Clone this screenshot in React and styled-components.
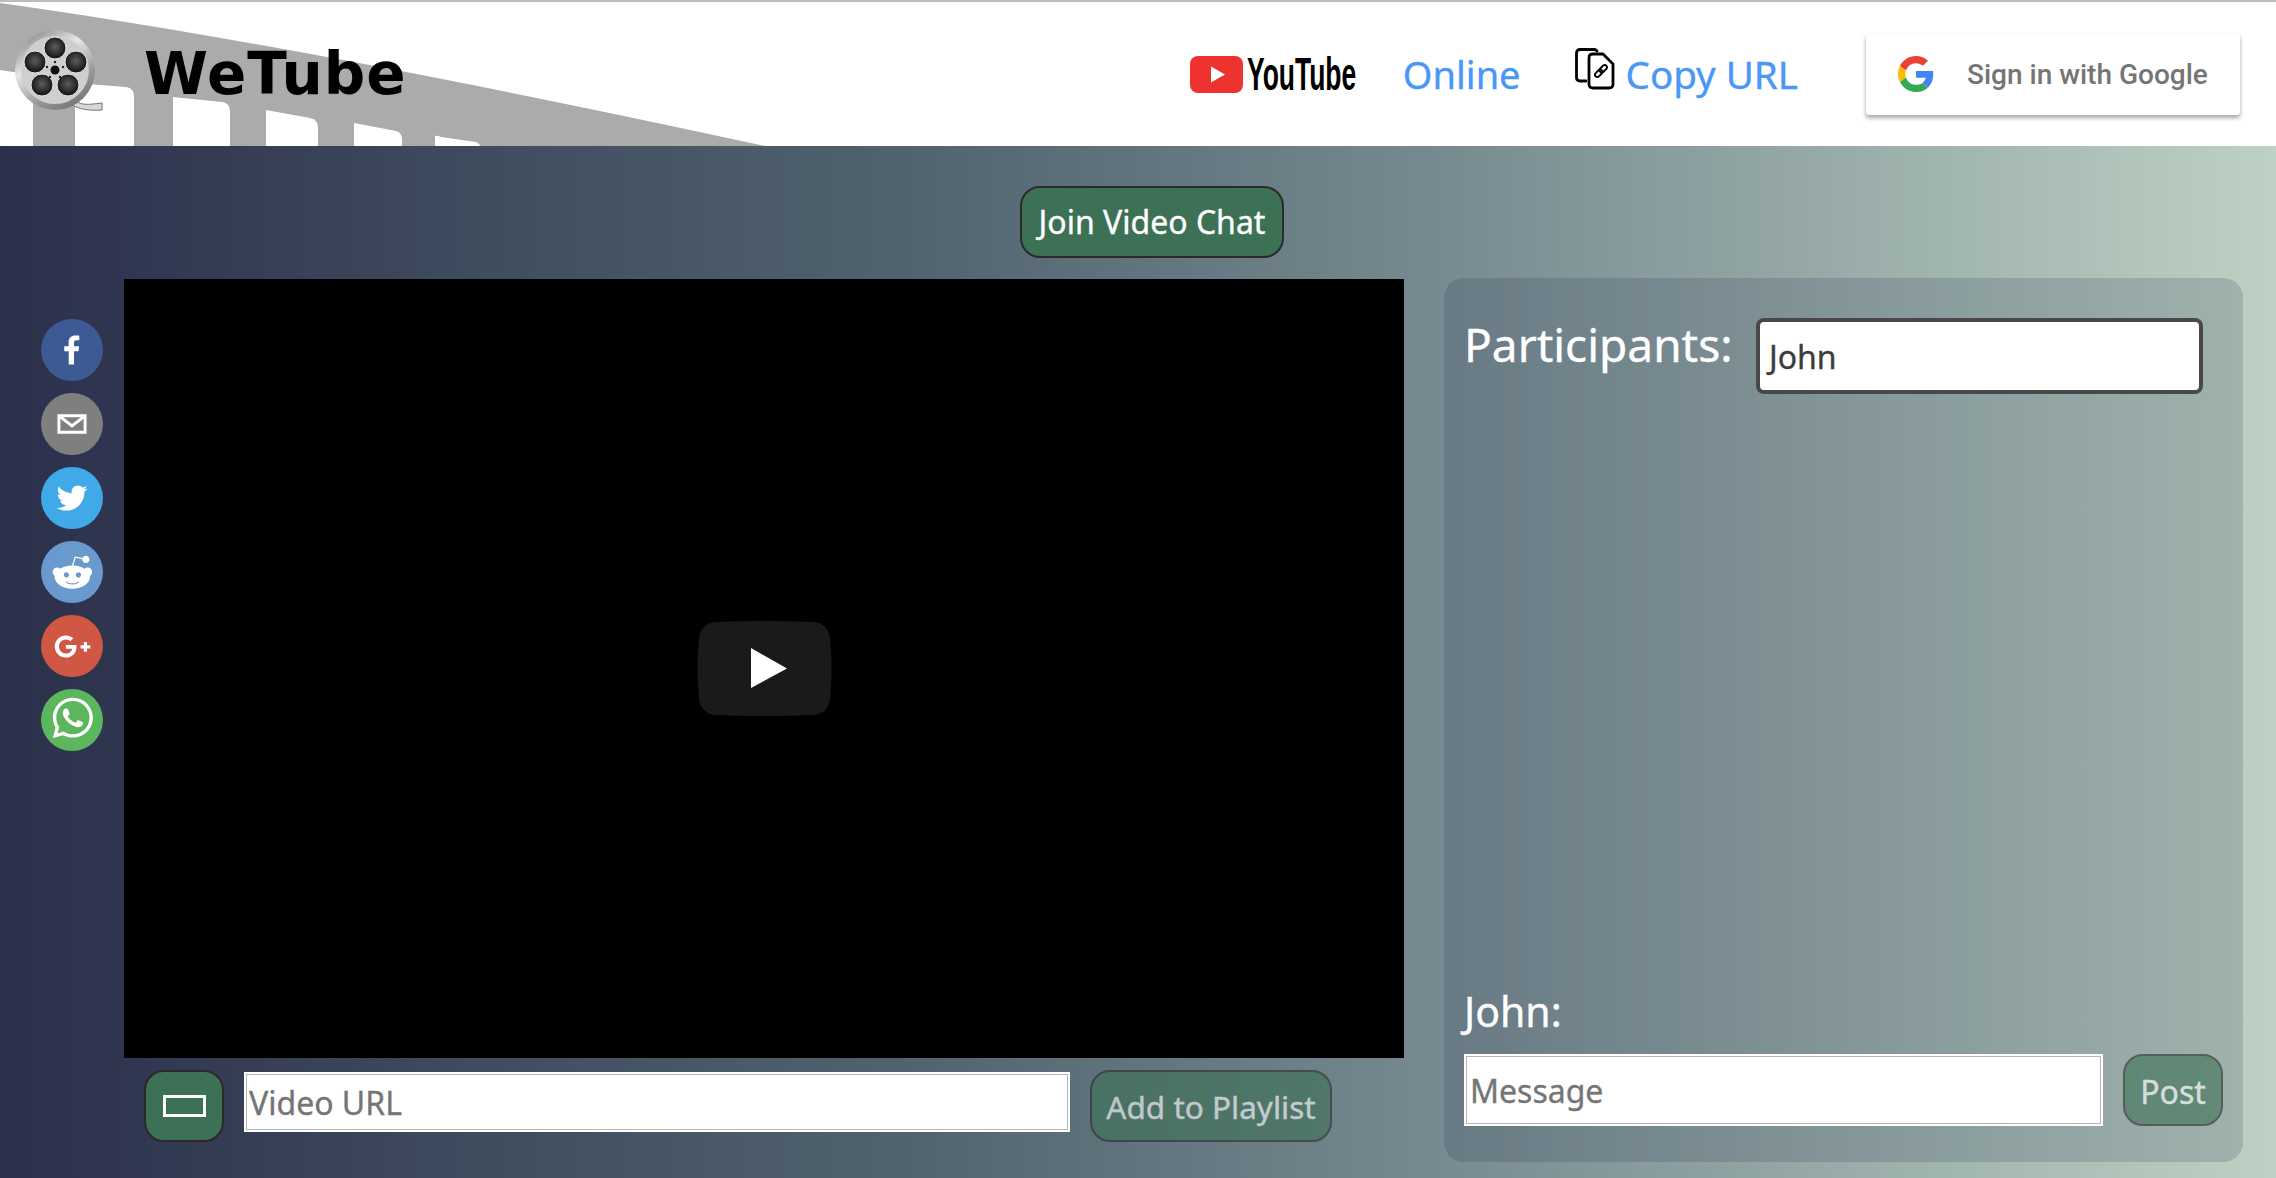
import React from "react";
import styled, { createGlobalStyle } from "styled-components";
import { FaGooglePlusG } from "react-icons/fa";

const SHARE_ICONS = [
  {
    name: "facebook",
    color: "#3d5a94",
    d: "M34.1,47V33.3h4.6l0.7-5.3h-5.3v-3.4c0-1.5,0.4-2.6,2.6-2.6l2.8,0v-4.8c-0.5-0.1-2.2-0.2-4.1-0.2 c-4.1,0-6.9,2.5-6.9,7V28H24v5.3h4.6V47H34.1z",
  },
  {
    name: "email",
    color: "#7f7f7f",
    d: "M17,22v20h30V22H17z M41.1,25L32,32.1L22.9,25H41.1z M20,39V26.6l12,9.3l12-9.3V39H20z",
  },
  {
    name: "twitter",
    color: "#40a9e8",
    d: "M48,22.1c-1.2,0.5-2.4,0.9-3.8,1c1.4-0.8,2.4-2.1,2.9-3.6c-1.3,0.8-2.7,1.3-4.2,1.6 C41.7,19.8,40,19,38.2,19c-3.6,0-6.6,2.9-6.6,6.6c0,0.5,0.1,1,0.2,1.5c-5.5-0.3-10.3-2.9-13.5-6.9c-0.6,1-0.9,2.1-0.9,3.3 c0,2.3,1.2,4.3,2.9,5.5c-1.1,0-2.1-0.3-3-0.8c0,0,0,0.1,0,0.1c0,3.2,2.3,5.8,5.3,6.4c-0.6,0.1-1.1,0.2-1.7,0.2c-0.4,0-0.8,0-1.2-0.1 c0.8,2.6,3.3,4.5,6.1,4.6c-2.2,1.8-5.1,2.8-8.2,2.8c-0.5,0-1.1,0-1.6-0.1c2.9,1.9,6.4,2.9,10.1,2.9c12.1,0,18.7-10,18.7-18.7 c0-0.3,0-0.6,0-0.8C46,24.5,47.1,23.4,48,22.1z",
  },
  {
    name: "reddit",
    color: "#6a9acd",
    d: "m 52.8165,31.942362 c 0,-2.4803 -2.0264,-4.4965 -4.5169,-4.4965 -1.2155,0 -2.3171,0.4862 -3.128,1.2682 -3.077,-2.0247 -7.2403,-3.3133 -11.8507,-3.4782 l 2.5211,-7.9373 6.8272,1.5997 -0.0102,0.0986 c 0,2.0281 1.6575,3.6771 3.6958,3.6771 2.0366,0 3.6924,-1.649 3.6924,-3.6771 0,-2.0281 -1.6575,-3.6788 -3.6924,-3.6788 -1.564,0 -2.8968,0.9758 -3.4357,2.3443 l -7.3593,-1.7255 c -0.3213,-0.0782 -0.6477,0.1071 -0.748,0.4233 L 32,25.212062 c -4.8246,0.0578 -9.1953,1.3566 -12.41,3.4425 -0.8058,-0.7446 -1.8751,-1.2104 -3.0583,-1.2104 -2.4905,0 -4.5152,2.0179 -4.5152,4.4982 0,1.649 0.9061,3.0787 2.2389,3.8607 -0.0884,0.4794 -0.1462,0.9639 -0.1462,1.4569 0,6.6487 8.1736,12.0581 18.2223,12.0581 10.0487,0 18.224,-5.4094 18.224,-12.0581 0,-0.4658 -0.0493,-0.9248 -0.1275,-1.377 1.4144,-0.7599 2.3885,-2.2304 2.3885,-3.9406 z m -29.2808,3.0872 c 0,-1.4756 1.207,-2.6775 2.6894,-2.6775 1.4824,0 2.6877,1.2019 2.6877,2.6775 0,1.4756 -1.2053,2.6758 -2.6877,2.6758 -1.4824,0 -2.6894,-1.2002 -2.6894,-2.6758 z m 15.4037,7.9373 c -1.3549,1.3481 -3.4816,2.0043 -6.5008,2.0043 l -0.0221,-0.0051 -0.0221,0.0051 c -3.0209,0 -5.1476,-0.6562 -6.5008,-2.0043 -0.2465,-0.2448 -0.2465,-0.6443 0,-0.8891 0.2465,-0.2465 0.6477,-0.2465 0.8942,0 1.105,1.0999 2.9393,1.6337 5.6066,1.6337 l 0.0221,0.0051 0.0221,-0.0051 c 2.6673,0 4.5016,-0.5355 5.6066,-1.6354 0.2465,-0.2465 0.6477,-0.2448 0.8942,0 0.2465,0.2465 0.2465,0.6443 0,0.8908 z m -0.3213,-5.2615 c -1.4824,0 -2.6877,-1.2002 -2.6877,-2.6758 0,-1.4756 1.2053,-2.6775 2.6877,-2.6775 1.4824,0 2.6877,1.2019 2.6877,2.6775 0,1.4756 -1.2053,2.6758 -2.6877,2.6758 z",
  },
  { name: "google", color: "#cf5743", d: null },
  {
    name: "whatsapp",
    color: "#5cb65b",
    d: "m42.32286,33.93287c-0.5178,-0.2589 -3.04726,-1.49644 -3.52105,-1.66732c-0.4712,-0.17346 -0.81554,-0.2589 -1.15987,0.2589c-0.34175,0.51004 -1.33075,1.66474 -1.63108,2.00648c-0.30032,0.33658 -0.60064,0.36247 -1.11327,0.12945c-0.5178,-0.2589 -2.17994,-0.80259 -4.14759,-2.56312c-1.53269,-1.37217 -2.56312,-3.05503 -2.86603,-3.57283c-0.30033,-0.5178 -0.03366,-0.80259 0.22524,-1.06149c0.23301,-0.23301 0.5178,-0.59547 0.7767,-0.90616c0.25372,-0.31068 0.33657,-0.5178 0.51262,-0.85437c0.17088,-0.36246 0.08544,-0.64725 -0.04402,-0.90615c-0.12945,-0.2589 -1.15987,-2.79613 -1.58964,-3.80584c-0.41424,-1.00971 -0.84142,-0.88027 -1.15987,-0.88027c-0.29773,-0.02588 -0.64208,-0.02588 -0.98382,-0.02588c-0.34693,0 -0.90616,0.12945 -1.37736,0.62136c-0.4712,0.5178 -1.80194,1.76053 -1.80194,4.27186c0,2.51134 1.84596,4.945 2.10227,5.30747c0.2589,0.33657 3.63497,5.51458 8.80262,7.74113c1.23237,0.5178 2.1903,0.82848 2.94111,1.08738c1.23237,0.38836 2.35599,0.33657 3.24402,0.20712c0.99159,-0.15534 3.04985,-1.24272 3.47963,-2.45956c0.44013,-1.21683 0.44013,-2.22654 0.31068,-2.45955c-0.12945,-0.23301 -0.46601,-0.36247 -0.98382,-0.59548m-9.40068,12.84407l-0.02589,0c-3.05503,0 -6.08417,-0.82849 -8.72495,-2.38189l-0.62136,-0.37023l-6.47252,1.68286l1.73463,-6.29129l-0.41424,-0.64725c-1.70875,-2.71846 -2.6149,-5.85116 -2.6149,-9.07706c0,-9.39809 7.68934,-17.06155 17.15993,-17.06155c4.58253,0 8.88029,1.78642 12.11655,5.02268c3.23625,3.21036 5.02267,7.50812 5.02267,12.06476c-0.0078,9.3981 -7.69712,17.06155 -17.14699,17.06155m14.58906,-31.58846c-3.93529,-3.80584 -9.1133,-5.95471 -14.62789,-5.95471c-11.36055,0 -20.60848,9.2065 -20.61625,20.52564c0,3.61684 0.94757,7.14565 2.75211,10.26282l-2.92557,10.63564l10.93337,-2.85309c3.0136,1.63108 6.4052,2.4958 9.85634,2.49839l0.01037,0c11.36574,0 20.61884,-9.2091 20.62403,-20.53082c0,-5.48093 -2.14111,-10.64081 -6.03239,-14.51915",
  },
];

const FILM_HOLES = [
  "M0,70 L33,75 V146 H0 Z",
  "M75,83 L126,87 Q134,88 134,96 V146 H75 Z",
  "M173,97 L222,102 Q230,103 230,111 V146 H173 Z",
  "M266,110 L310,118 Q318,120 318,127 V146 H266 Z",
  "M354,123 L396,131 Q402,133 402,139 V146 H354 Z",
  "M435,136 Q437,135 441,137 L476,142 Q480,144 480,146 H435 Z",
];

// petal centres of the film reel, relative to its hub
const REEL_PETALS = [
  [0, -22],
  [-20, -8],
  [21, -8],
  [-13, 15],
  [13, 15],
];

const REEL_DOTS = [
  [0, -8],
  [-8, -3],
  [8, -3],
  [-5, 7],
  [5, 7],
];

const App = () => {
  return (
    <Page>
      <GlobalStyle />
      <Header>
        <FilmStrip viewBox="0 0 770 144" width="770" height="144">
          <path d="M0,1 Q300,43 765,144 H0 Z" fill="#ababab" />
          {FILM_HOLES.map((d) => (
            <path key={d} d={d} fill="#fff" transform="translate(0,-2)" />
          ))}
        </FilmStrip>
        <Brand>
          <ReelLogo />
          <BrandName>WeTube</BrandName>
        </Brand>
        <HeaderActions>
          <YoutubeLink>
            <svg viewBox="0 0 53 37" width="53" height="37">
              <rect width="53" height="37" rx="8" fill="#ed322f" />
              <path d="M21 10.5 L35 18.5 L21 26.5 Z" fill="#fff" />
            </svg>
            <YoutubeWord>YouTube</YoutubeWord>
          </YoutubeLink>
          <OnlineText>Online</OnlineText>
          <CopyLink>
            <CopyIcon />
            <span>Copy URL</span>
          </CopyLink>
          <GoogleButton>
            <GoogleIcon />
            <span>Sign in with Google</span>
          </GoogleButton>
        </HeaderActions>
      </Header>

      <Main>
        <JoinRow>
          <GreenButton>Join Video Chat</GreenButton>
        </JoinRow>
        <Content>
          <ShareColumn>
            {SHARE_ICONS.map((icon) => (
              <ShareCircle key={icon.name} $color={icon.color}>
                {icon.d ? (
                  <svg viewBox="0 0 64 64" width="62" height="62">
                    <path d={icon.d} fill="#fff" />
                  </svg>
                ) : (
                  <FaGooglePlusG size={37} color="#fff" />
                )}
              </ShareCircle>
            ))}
          </ShareColumn>

          <PlayerColumn>
            <VideoFrame>
              <PlayButton>
                <svg viewBox="0 0 135 95" width="135" height="95">
                  <path
                    d="M18,1 Q67,-1 117,1 Q131,3 133,17 Q136,47 133,78 Q131,92 117,94 Q67,96 18,94 Q4,92 2,78 Q-1,47 2,17 Q4,3 18,1 Z"
                    fill="#1a1a1a"
                  />
                  <path d="M54,27 L90,47.5 L54,67 Z" fill="#fff" />
                </svg>
              </PlayButton>
            </VideoFrame>
            <PlayerControls>
              <ToggleButton>
                <ToggleGlyph />
              </ToggleButton>
              <UrlInput placeholder="Video URL" />
              <PlaylistButton $muted>Add to Playlist</PlaylistButton>
            </PlayerControls>
          </PlayerColumn>

          <ChatPanel>
            <ParticipantsRow>
              <PanelTitle>Participants:</PanelTitle>
              <ParticipantsBox>John</ParticipantsBox>
            </ParticipantsRow>
            <Composer>
              <ComposerName>John:</ComposerName>
              <ComposerRow>
                <MessageInput placeholder="Message" />
                <PostButton $muted>Post</PostButton>
              </ComposerRow>
            </Composer>
          </ChatPanel>
        </Content>
      </Main>
    </Page>
  );
};

const ReelLogo = () => (
  <ReelSvg viewBox="0 0 90 82" width="90" height="82">
    <defs>
      <linearGradient id="reelRim" x1="0.2" y1="0" x2="0.8" y2="1">
        <stop offset="0" stopColor="#8a8a8a" />
        <stop offset="0.35" stopColor="#e6e6e6" />
        <stop offset="0.7" stopColor="#9a9a9a" />
        <stop offset="1" stopColor="#6e6e6e" />
      </linearGradient>
      <radialGradient id="reelPetal" cx="0.5" cy="0.45" r="0.6">
        <stop offset="0" stopColor="#5c5c5c" />
        <stop offset="0.7" stopColor="#222" />
        <stop offset="1" stopColor="#0c0c0c" />
      </radialGradient>
    </defs>
    <path d="M62,72 C68,76 72,76 88,74 L88,81 C74,82 66,80 58,76 Z" fill="#d8d8d8" stroke="#777" strokeWidth="1" />
    <circle cx="41" cy="41" r="40" fill="url(#reelRim)" />
    <circle cx="41" cy="41" r="34" fill="#cfcfcf" />
    {REEL_PETALS.map(([x, y]) => (
      <circle key={`${x}-${y}`} cx={41 + x} cy={41 + y} r="11" fill="url(#reelPetal)" stroke="#e8e8e8" strokeWidth="1" />
    ))}
    {REEL_DOTS.map(([x, y]) => (
      <circle key={`${x}-${y}`} cx={41 + x} cy={41 + y} r="1.2" fill="#222" />
    ))}
    <circle cx="41" cy="41" r="4.5" fill="#111" />
  </ReelSvg>
);

const CopyIcon = () => (
  <svg viewBox="0 0 42 42" width="42" height="42" fill="none" stroke="#000" strokeWidth="2.8">
    <path d="M11 33 H5 Q1.5 33 1.5 29.5 V5 Q1.5 1.5 5 1.5 H19 Q21 1.5 22 3" strokeLinecap="round" />
    <path d="M18 6 H28 L38 16 V36 Q38 40 34 40 H18 Q14 40 14 36 V10 Q14 6 18 6 Z" fill="#fff" strokeLinejoin="round" />
    <g strokeWidth="1.9" transform="rotate(-45 26 23)">
      <rect x="18.5" y="20.7" width="8.6" height="4.6" rx="2.3" />
      <rect x="24.9" y="20.7" width="8.6" height="4.6" rx="2.3" />
    </g>
  </svg>
);

const GoogleIcon = () => (
  <svg viewBox="0 0 48 48" width="36" height="36">
    <path fill="#EA4335" d="M24 9.5c3.54 0 6.71 1.22 9.21 3.6l6.85-6.85C35.9 2.38 30.47 0 24 0 14.62 0 6.51 5.38 2.56 13.22l7.98 6.19C12.43 13.72 17.74 9.5 24 9.5z" />
    <path fill="#4285F4" d="M46.98 24.55c0-1.57-.15-3.09-.38-4.55H24v9.02h12.94c-.58 2.96-2.26 5.48-4.78 7.18l7.73 6c4.51-4.18 7.09-10.36 7.09-17.65z" />
    <path fill="#FBBC05" d="M10.53 28.59c-.48-1.45-.76-2.99-.76-4.59s.27-3.14.76-4.59l-7.98-6.19C.92 16.46 0 20.12 0 24c0 3.88.92 7.54 2.56 10.78l7.97-6.19z" />
    <path fill="#34A853" d="M24 48c6.48 0 11.93-2.13 15.89-5.81l-7.73-6c-2.15 1.45-4.92 2.3-8.16 2.3-6.26 0-11.57-4.22-13.47-9.91l-7.98 6.19C6.51 42.62 14.62 48 24 48z" />
  </svg>
);

const UI_FONT = `"Noto Sans", "Open Sans", sans-serif`;

const GlobalStyle = createGlobalStyle`
  html, body {
    margin: 0;
    height: 1178px;
    overflow: hidden;
  }
  * {
    box-sizing: border-box;
  }
`;

const Page = styled.div`
  width: 2276px;
  height: 1178px;
  display: flex;
  flex-direction: column;
  font-family: ${UI_FONT};
  -webkit-text-stroke: 0.35px;
`;

const Header = styled.header`
  position: relative;
  height: 146px;
  display: flex;
  align-items: center;
  justify-content: space-between;
  background: #fff;
  border-top: 2px solid #bcbcbc;
  overflow: hidden;
`;

const FilmStrip = styled.svg`
  position: absolute;
  top: 0;
  left: 0;
`;

const Brand = styled.div`
  position: relative;
  display: flex;
  align-items: center;
  gap: 40px;
  padding-left: 14px;
`;

const ReelSvg = styled.svg`
  margin-bottom: 8px;
`;

const BrandName = styled.div`
  font-family: "DejaVu Sans", sans-serif;
  font-size: 58px;
  font-weight: 700;
  letter-spacing: 1px;
  line-height: 1;
  color: #000;
  -webkit-text-stroke: 0;
`;

const HeaderActions = styled.div`
  display: flex;
  align-items: center;
  padding-right: 36px;
`;

const YoutubeLink = styled.div`
  display: flex;
  align-items: center;
  gap: 4px;
  margin-right: 45px;
`;

const YoutubeWord = styled.span`
  display: inline-block;
  width: 111px;
  font-family: "Liberation Sans", sans-serif;
  font-size: 46px;
  font-weight: 700;
  line-height: 1;
  color: #000;
  white-space: nowrap;
  -webkit-text-stroke: 0;
  transform: scaleX(0.575);
  transform-origin: left center;
`;

const OnlineText = styled.span`
  font-size: 38px;
  color: #4a97f7;
  margin-right: 54px;
`;

const CopyLink = styled.div`
  display: flex;
  align-items: center;
  gap: 9px;
  font-size: 38.5px;
  color: #4a97f7;
  margin-right: 68px;

  svg {
    transform: translateY(-5px);
  }
`;

const GoogleButton = styled.div`
  width: 374px;
  height: 81px;
  display: flex;
  align-items: center;
  gap: 33px;
  padding-left: 32px;
  background: #fff;
  border-radius: 3px;
  box-shadow: 0 3px 4px rgba(0, 0, 0, 0.35), 0 0 1px rgba(0, 0, 0, 0.15);
  font-family: Roboto, sans-serif;
  font-size: 28px;
  font-weight: 500;
  color: #757575;
  white-space: nowrap;
  -webkit-text-stroke: 0;
`;

const Main = styled.main`
  flex: 1;
  min-height: 0;
  padding-top: 40px;
  background: linear-gradient(
    to right,
    #2b2f4b 0%,
    #404d5f 22%,
    #51636f 40%,
    #7a8d93 65%,
    #bdd1c4 100%
  );
`;

const JoinRow = styled.div`
  display: flex;
  justify-content: center;
  padding-left: 28px;
  margin-bottom: 21px;
`;

const GreenButton = styled.button`
  height: 72px;
  padding: 0 17px;
  background: #3c7155;
  border: 2px solid #2a2a2a;
  border-radius: 20px;
  font-family: ${UI_FONT};
  font-size: 32px;
  line-height: 1;
  color: #fff;
  white-space: nowrap;
  -webkit-text-stroke: 0.35px;
  opacity: ${(props) => (props.$muted ? 0.6 : 1)};
`;

const PlaylistButton = styled(GreenButton)`
  width: 242px;
  padding: 2px 0 0;
  font-size: 31.5px;
`;

const Content = styled.div`
  display: flex;
  align-items: flex-start;
`;

const ShareColumn = styled.div`
  width: 124px;
  flex: none;
  display: flex;
  flex-direction: column;
  gap: 12px;
  padding: 40px 0 0 41px;
`;

const ShareCircle = styled.div`
  width: 62px;
  height: 62px;
  display: flex;
  align-items: center;
  justify-content: center;
  border-radius: 50%;
  background: ${(props) => props.$color};
`;

const PlayerColumn = styled.div`
  width: 1280px;
  flex: none;
`;

const VideoFrame = styled.div`
  height: 779px;
  display: flex;
  align-items: center;
  justify-content: center;
  background: #000;
`;

const PlayButton = styled.div`
  width: 135px;
  height: 95px;
  line-height: 0;
`;

const PlayerControls = styled.div`
  display: flex;
  align-items: flex-start;
  gap: 20px;
  padding: 12px 0 0 20px;
`;

const ToggleButton = styled.button`
  width: 80px;
  height: 72px;
  display: flex;
  align-items: center;
  justify-content: center;
  padding: 0;
  background: #3c7155;
  border: 2px solid #2a2a2a;
  border-radius: 20px;
`;

const ToggleGlyph = styled.span`
  display: block;
  width: 43px;
  height: 22px;
  border: 3px solid #fff;
`;

const TextInput = styled.input`
  background: #fff;
  border: 2px solid #fff;
  box-shadow: inset 0 0 0 1px #b5b5b5;
  padding: 0 3px;
  font-family: ${UI_FONT};
  font-size: 32px;
  color: #333;
  outline: none;
  -webkit-text-stroke: 0.35px;

  &::placeholder {
    color: #757575;
    opacity: 1;
  }
`;

const UrlInput = styled(TextInput)`
  width: 826px;
  height: 60px;
  margin-top: 2px;
`;

const ChatPanel = styled.aside`
  width: 799px;
  height: 884px;
  flex: none;
  margin: -1px 0 0 40px;
  padding: 40px 20px 36px 20px;
  display: flex;
  flex-direction: column;
  justify-content: space-between;
  background: rgba(30, 40, 70, 0.17);
  border-radius: 20px;
`;

const ParticipantsRow = styled.div`
  display: flex;
  align-items: flex-start;
  gap: 22px;
`;

const PanelTitle = styled.h2`
  width: 270px;
  margin: 0;
  font-size: 46px;
  font-weight: 400;
  line-height: 52px;
  color: #fff;
  white-space: nowrap;
`;

const ParticipantsBox = styled.div`
  width: 447px;
  height: 76px;
  padding: 15px 9px 0;
  background: #fff;
  border: 4px solid #484848;
  border-radius: 8px;
  font-size: 32px;
  line-height: 40px;
  color: #3c3c3c;
`;

const Composer = styled.div`
  display: flex;
  flex-direction: column;
  gap: 18px;
`;

const ComposerName = styled.div`
  font-size: 41px;
  line-height: 50px;
  color: #fff;
`;

const ComposerRow = styled.div`
  display: flex;
  gap: 20px;
`;

const MessageInput = styled(TextInput)`
  width: 640px;
  height: 72px;
  padding: 0 4px;
`;

const PostButton = styled(GreenButton)`
  width: 100px;
  padding: 3px 0 0;
`;

export default App;
